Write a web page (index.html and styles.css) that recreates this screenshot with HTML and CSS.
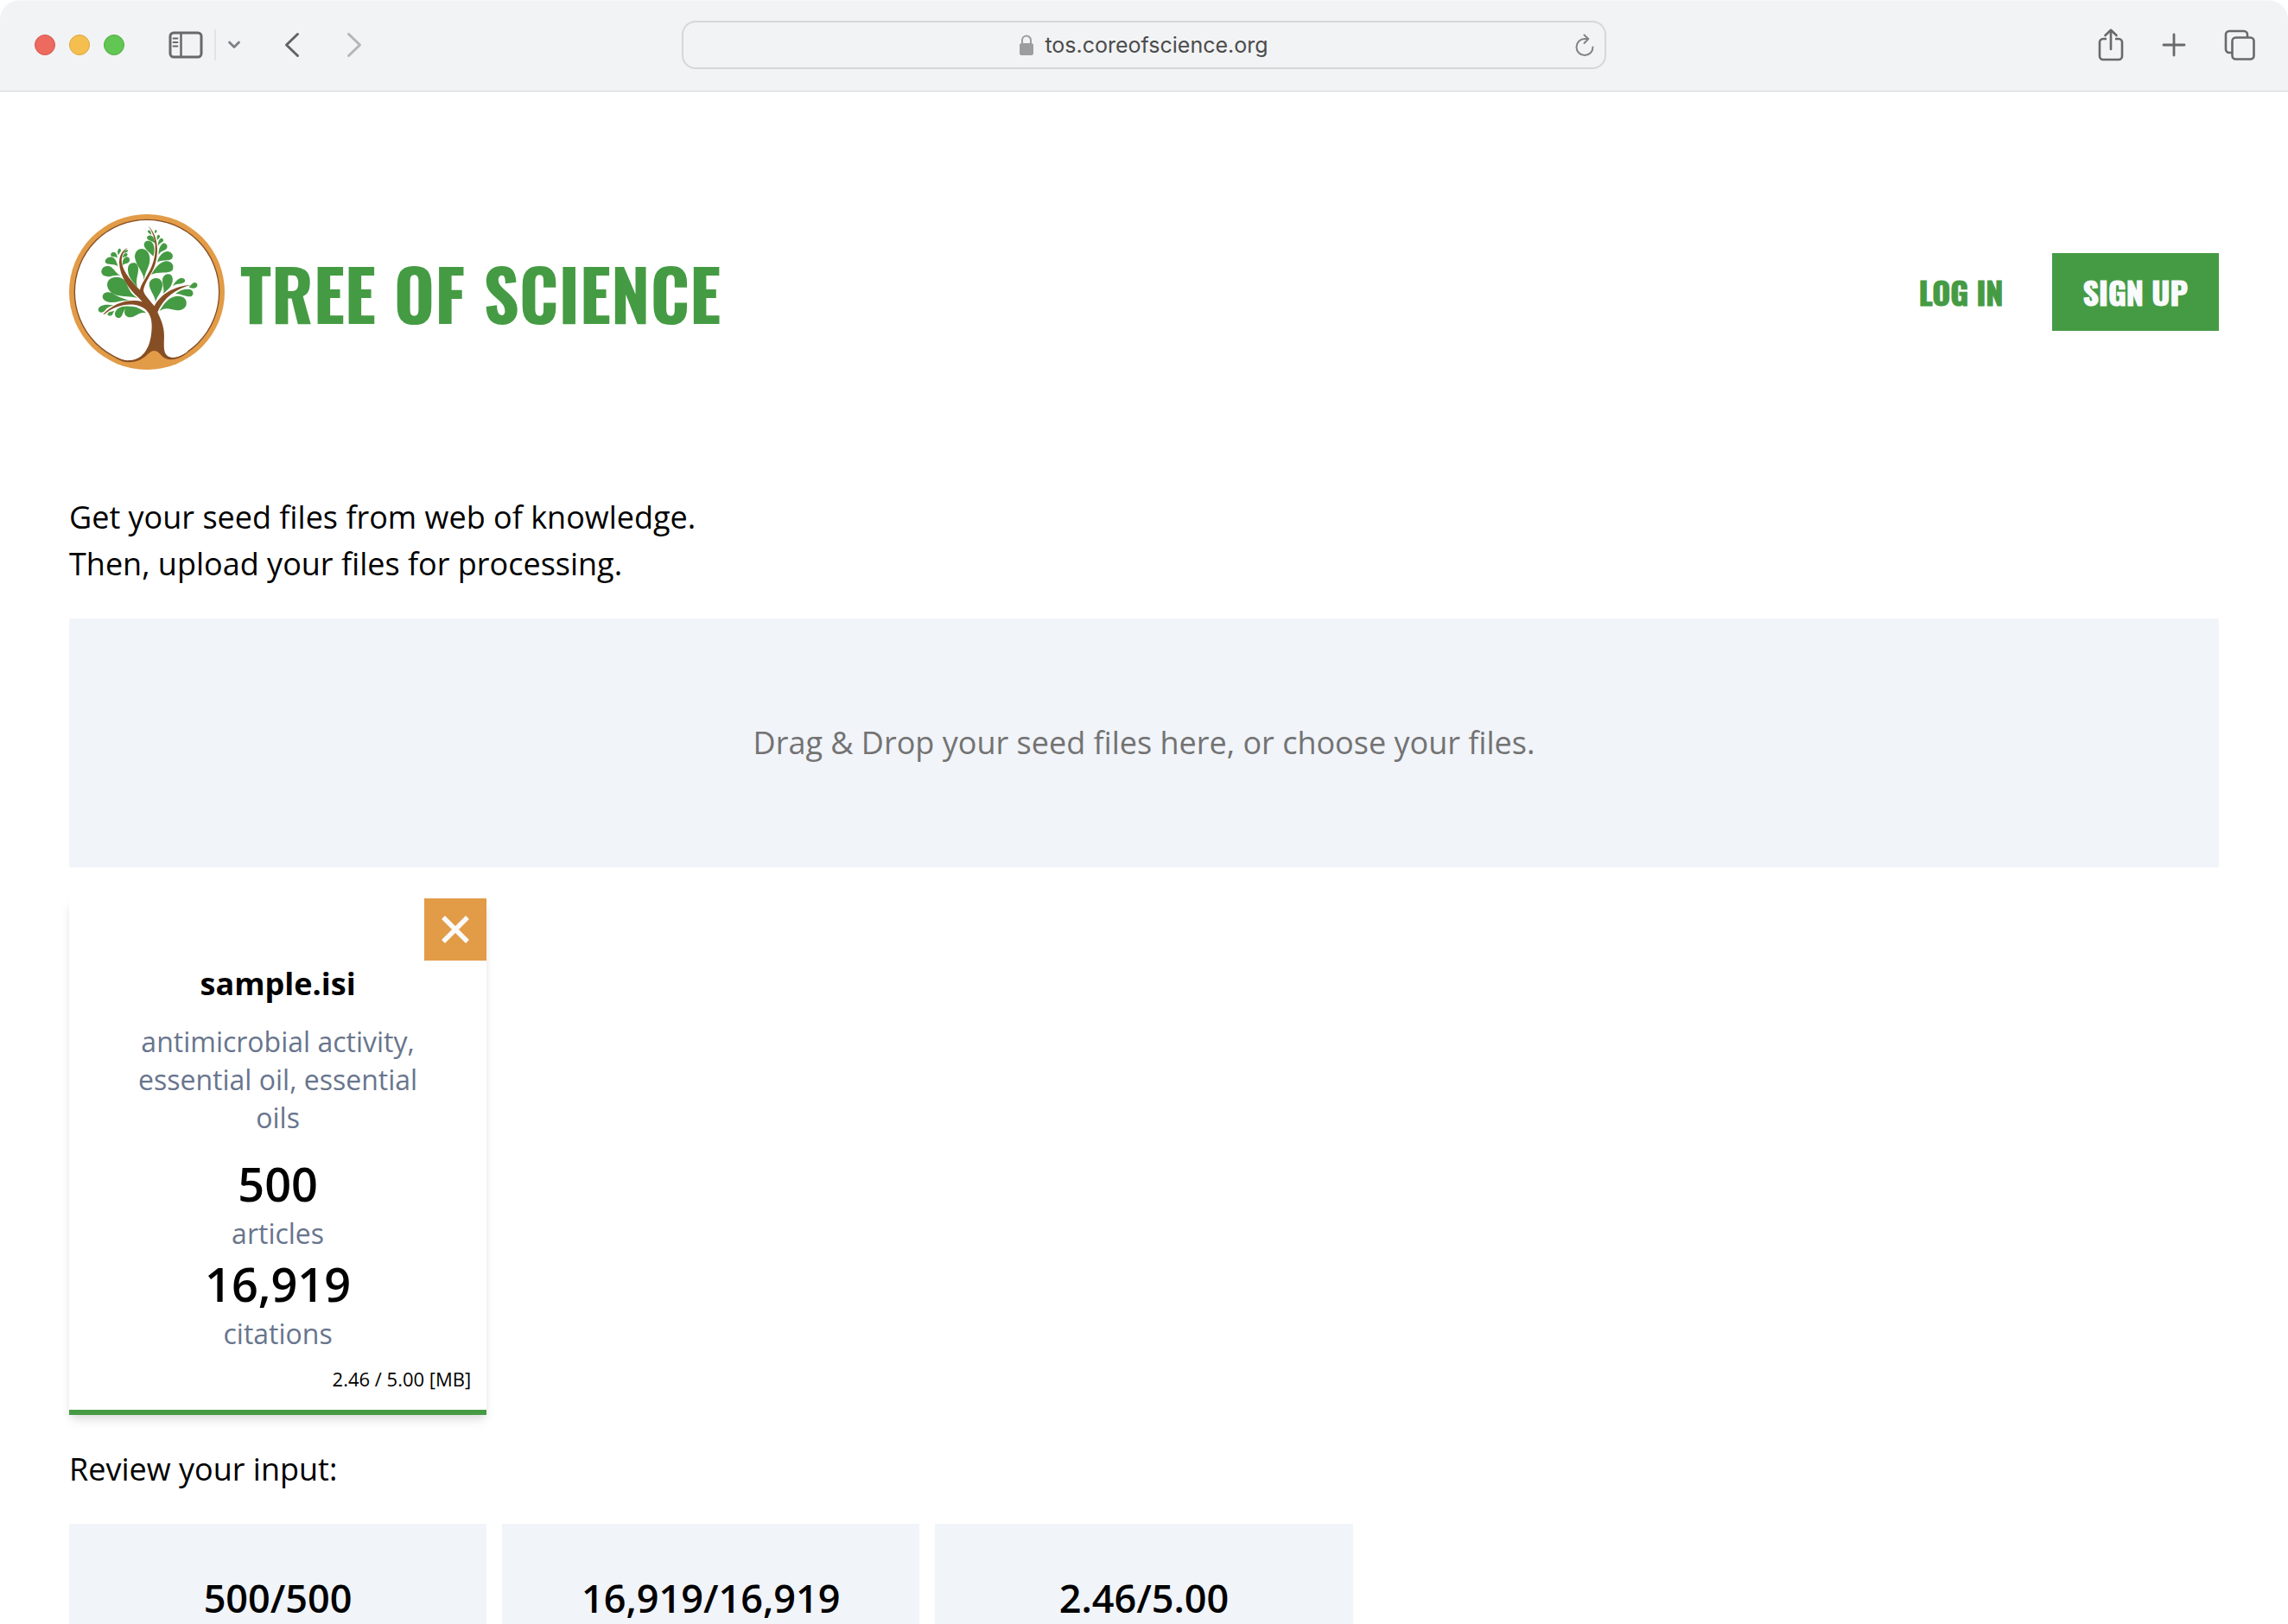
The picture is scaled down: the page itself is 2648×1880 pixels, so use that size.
FILE: index.html
```html
<!DOCTYPE html>
<html lang="en">
<head>
<meta charset="utf-8">
<title>Tree of Science</title>
<meta name="viewport" content="width=device-width, initial-scale=1">
<link rel="stylesheet" href="styles.css">
</head>
<body>
<div class="toolbar">
  <div class="toolbar-side">
    <div class="lights"><span class="light red"></span><span class="light yellow"></span><span class="light green"></span></div>
    <button class="tool sidebar-tool" aria-label="Show sidebar">
      <svg width="40" height="32" viewBox="0 0 40 32" fill="none" stroke="#69696b" stroke-width="3"><rect x="2" y="2" width="36" height="28" rx="4"/><path d="M14.500 2v28" stroke-width="2.500"/><path d="M5.500 8.500h5M5.500 13h5M5.500 17.500h5" stroke-width="1.800" stroke-linecap="round"/></svg>
    </button>
    <span class="divider"></span>
    <button class="tool menu-tool" aria-label="Sidebar options">
      <svg width="16" height="12" viewBox="0 0 16 12" fill="none" stroke="#7f7f86" stroke-width="2.800" stroke-linecap="round" stroke-linejoin="round"><path d="M2.500 3l5.500 5.500L13.500 3"/></svg>
    </button>
    <button class="tool back-tool" aria-label="Back">
      <svg width="18" height="30" viewBox="0 0 18 30" fill="none" stroke="#636366" stroke-width="3" stroke-linecap="round" stroke-linejoin="round"><path d="M15.500 2.500L2.500 15l13 12.500"/></svg>
    </button>
    <button class="tool" aria-label="Forward">
      <svg width="18" height="30" viewBox="0 0 18 30" fill="none" stroke="#b4b5b7" stroke-width="3" stroke-linecap="round" stroke-linejoin="round"><path d="M2.500 2.500L15.500 15l-13 12.500"/></svg>
    </button>
  </div>
  <div class="address">
    <svg width="16" height="24" viewBox="0 0 16 24"><rect x="0" y="10" width="16" height="14" rx="2.500" fill="#9c9d9d"/><path d="M3 11V6.500a5 5 0 0 1 10 0V11" fill="none" stroke="#9c9d9d" stroke-width="2"/></svg>
    <span>tos.coreofscience.org</span>
    <button class="reload" aria-label="Reload page">
      <svg width="22" height="26" viewBox="0 0 22 26" fill="none" stroke="#838385" stroke-width="2" stroke-linecap="round" stroke-linejoin="round"><path d="M15 6H11A9.500 9.500 0 1 0 20.500 15.500M10.500 1.500L15.300 6l-4.800 5"/></svg>
    </button>
  </div>
  <div class="toolbar-side toolbar-end">
    <button class="tool" aria-label="Share">
      <svg width="30" height="38" viewBox="0 0 30 38" fill="none" stroke="#69696b" stroke-width="2.600" stroke-linejoin="round"><path d="M10 12H6a4 4 0 0 0-4 4v16a4 4 0 0 0 4 4h18a4 4 0 0 0 4-4V16a4 4 0 0 0-4-4h-4"/><path d="M15 24V2M8.500 8L15 1.800 21.500 8" stroke-linecap="round"/></svg>
    </button>
    <button class="tool" aria-label="New tab">
      <svg width="28" height="28" viewBox="0 0 28 28" stroke="#69696b" stroke-width="2.800" stroke-linecap="round"><path d="M14 2v24M2 14h24"/></svg>
    </button>
    <button class="tool" aria-label="Show all tabs">
      <svg width="36" height="36" viewBox="0 0 36 36" fill="none" stroke="#69696b" stroke-width="2.600"><path d="M9 27H6a4 4 0 0 1-4-4V6a4 4 0 0 1 4-4h17a4 4 0 0 1 4 4v3"/><rect x="9.500" y="9.500" width="25" height="25" rx="4"/></svg>
    </button>
  </div>
</div>

<div class="page">
  <header class="header">
    <a class="brand" href="#">
      <svg class="logo" viewBox="30 36 540 540" aria-hidden="true">
        <circle cx="300" cy="306" r="270" fill="#e29b47"/>
        <circle cx="300" cy="306" r="251" fill="#fff" stroke="#864e24" stroke-width="4"/>
        <path fill="#e29b47" d="M195 538C250 562 285 530 300 500H345C355 540 375 550 415 532L400 556L300 570L200 556Z"/>
        <path fill="#fff" d="M190 529C205 538 222 545 242 545C290 543 316 490 318 430L358 440C354 510 355 538 388 535C408 533 424 526 442 512L400 420H200Z"/>
        <path fill="#864e24" d="M148 384C175 352 220 333 262 336C272 337 278 338 284 340L270 325C235 294 206 250 204 205C204 180 214 161 234 152C217 166 210 185 213 206C220 240 250 273 276 299C278 280 303 250 317 216C336 170 334 115 305 77C338 108 343 165 328 212C317 244 290 275 288 302C292 318 312 337 326 355C347 313 400 283 454 282C405 292 358 325 337 376C345 395 360 420 360 460C359 500 355 530 388 534C412 534 430 524 450 508C430 530 405 541 380 541C350 540 347 510 325 510C303 510 295 548 240 550C220 550 200 543 180 527C200 539 220 545 242 543C290 540 316 495 317 425C317 398 310 382 296 367C262 338 195 345 152 384Z"/>
        <g fill="#459b43">
          <path d="M298 379C270 358 245 350 228 362C215 375 225 395 243 394C265 392 270 374 298 379Z"/>
          <path d="M243 357C215 352 193 362 189 380C188 398 208 402 214 387C219 373 222 362 243 357Z"/>
          <path d="M187 371C178 374 164 374 163 384C166 391 178 390 181 383C183 378 184 375 187 371Z"/>
          <path d="M184 352C160 348 136 350 131 366C131 380 148 380 155 370C162 360 172 356 184 352Z"/>
          <path d="M238 335C215 330 195 320 178 309C160 302 145 310 146 324C150 343 180 346 205 338C218 335 228 335 238 335Z"/>
          <path d="M268 327C240 312 236 290 226 270C212 250 180 250 166 267C155 285 168 310 195 317C220 322 240 320 268 327Z"/>
          <path d="M208 249C190 240 185 222 170 217C155 212 141 222 142 238C147 256 168 254 182 250C192 247 200 248 208 249Z"/>
          <path d="M200 217C195 205 193 190 180 185C165 182 152 192 156 204C164 213 185 206 200 217Z"/>
          <path d="M198 188C196 180 196 170 186 168C176 167 171 176 177 182C184 186 192 182 198 188Z"/>
          <path d="M201 178C198 170 196 160 204 155C211 155 211 163 207 168Z"/>
          <path d="M216 213C214 200 218 187 230 184C241 184 243 197 237 203C230 208 222 206 216 213Z"/>
          <path d="M215 188C217 176 222 170 230 171C235 174 233 182 227 183C222 184 219 184 215 188Z"/>
          <path d="M220 172C222 164 227 159 233 160C236 164 232 168 228 169Z"/>
          <path d="M268 291C255 275 235 255 234 230C233 210 245 202 258 205C272 210 272 228 268 245C264 262 262 275 268 291Z"/>
          <path d="M290 264C288 235 262 215 258 185C258 162 275 152 292 158C310 167 314 190 307 212C300 232 292 245 290 264Z"/>
          <path d="M322 183C315 170 292 160 290 143C290 128 305 124 316 132C328 142 328 165 322 183Z"/>
          <path d="M327 138C322 128 302 130 300 118C302 107 315 108 321 115C326 122 328 130 327 138Z"/>
          <path d="M316 108C312 104 302 102 303 94C307 88 313 93 314 99Z"/>
          <path d="M328 103C327 97 326 91 331 90C337 93 335 99 328 103Z"/>
          <path d="M336 126C334 116 334 108 341 107C348 110 345 118 340 121Z"/>
          <path d="M339 146C337 135 342 122 350 119C358 121 360 128 353 133C346 137 341 140 339 146Z"/>
          <path d="M341 178C339 160 346 142 358 136C372 138 375 152 365 159C355 164 345 166 341 178Z"/>
          <path d="M336 203C340 185 352 168 370 165C388 165 395 182 386 191C372 200 350 192 336 203Z"/>
          <path d="M315 246C328 225 340 205 365 199C388 198 396 216 389 230C375 245 340 232 315 246Z"/>
          <path d="M330 342C330 320 308 300 308 278C310 260 328 254 343 260C358 270 356 290 348 305C340 320 332 328 330 342Z"/>
          <path d="M357 313C362 298 353 280 354 262C358 245 373 240 384 247C393 258 390 275 382 287C374 298 364 303 357 313Z"/>
          <path d="M389 285C398 272 405 260 420 257C432 258 436 266 430 272C418 280 402 276 389 285Z"/>
          <path d="M446 290C452 284 455 276 465 273C475 273 478 282 473 289C466 296 456 292 446 290Z"/>
          <path d="M399 312C415 300 430 295 450 297C462 302 464 314 455 321C440 326 420 312 399 312Z"/>
          <path d="M343 373C358 350 370 328 400 321C425 318 440 330 437 350C430 372 405 372 385 366C368 362 355 364 343 373Z"/>
        </g>
      </svg>
      <h1 class="title">TREE OF SCIENCE</h1>
    </a>
    <nav class="nav">
      <a class="login" href="#">LOG IN</a>
      <a class="signup" href="#">SIGN UP</a>
    </nav>
  </header>

  <main class="main">
    <p>Get your seed files from web of knowledge.<br>Then, upload your files for processing.</p>
    <button class="dropzone">Drag &amp; Drop your seed files here, or choose your files.</button>
    <div class="grid">
      <article class="card">
        <button class="remove" aria-label="Remove file">
          <svg width="32" height="32" viewBox="0 0 32 32" stroke="#fafafa" stroke-width="5.500"><path d="M2 2l28 28M30 2L2 30"/></svg>
        </button>
        <div class="card-body">
          <h2 class="filename">sample.isi</h2>
          <p class="note keywords">antimicrobial activity, essential oil, essential oils</p>
          <p class="count">500</p>
          <p class="note">articles</p>
          <p class="count">16,919</p>
          <p class="note">citations</p>
        </div>
        <p class="size">2.46 / 5.00 [MB]</p>
      </article>
    </div>
    <p>Review your input:</p>
    <div class="grid">
      <div class="stat">500/500</div>
      <div class="stat">16,919/16,919</div>
      <div class="stat">2.46/5.00</div>
    </div>
  </main>
</div>
</body>
</html>
```
FILE: styles.css
```css
* { box-sizing: border-box; }
html { background: #fff; }
body {
  margin: 0;
  height: 100vh;
  overflow: hidden;
  font-family: "Open Sans", "Noto Sans", sans-serif;
  font-size: 36px;
  line-height: 54px;
  color: #000;
}
h1, h2, p { margin: 0; font-weight: inherit; }
button { border: 0; padding: 0; background: none; font: inherit; color: inherit; cursor: pointer; }
a { text-decoration: none; color: inherit; }
svg { display: block; flex: none; }

.toolbar {
  display: grid;
  grid-template-columns: 1fr 1070px 1fr;
  align-items: center;
  height: 106px;
  padding: 0 38px 2px;
  background: #f2f3f5;
  border-top: 1px solid #f8f9fa;
  border-bottom: 1px solid #d6d7d9;
  border-radius: 22px 22px 0 0;
}
.toolbar-side { display: flex; align-items: center; }
.toolbar-end { justify-content: flex-end; gap: 44px; }
.lights { display: flex; gap: 16px; margin-left: 2px; }
.light { width: 24px; height: 24px; border-radius: 50%; border: 1px solid; }
.red { background: #ec6a5e; border-color: #d8564c; }
.yellow { background: #f5bf4f; border-color: #dca73c; }
.green { background: #62c655; border-color: #4fae41; }
.sidebar-tool { margin-left: 51px; }
.divider { width: 2px; height: 36px; margin: 0 13px; background: #e2e3e5; }
.back-tool { margin: 0 54px 0 50px; }

.address {
  position: relative;
  display: flex;
  align-items: center;
  justify-content: center;
  gap: 13px;
  height: 56px;
  border: 2px solid #d5d7d9;
  border-radius: 16px;
  font: 25px/32px Inter, sans-serif;
  color: #4c4c4c;
}
.reload { position: absolute; right: 12px; }

.page { padding: 0 80px; }
.header { display: flex; justify-content: space-between; align-items: center; padding: 142px 0 144px; }
.brand, .nav { display: flex; align-items: center; font-family: Oswald, "Liberation Sans Narrow", "Liberation Sans", sans-serif; font-weight: 700; color: #459b43; }
.brand { gap: 18px; }
.logo { width: 180px; height: 180px; }
.title { font-size: 81px; line-height: 90px; font-weight: 700; }
.nav { font-size: 36px; gap: 56px; -webkit-text-stroke: 1px; }
.signup { padding: 18px 36px; background: #459b43; color: #f9fafc; }

.main { display: flex; flex-direction: column; gap: 36px; }
.dropzone { height: 288px; background: #f1f4f9; color: #737373; }
.grid { display: grid; grid-template-columns: repeat(5, 1fr); gap: 18px; }
.card {
  display: flex;
  flex-direction: column;
  border-bottom: 6px solid #459b43;
  box-shadow: 0 8px 12px -2px rgba(0, 0, 0, .1), 0 4px 8px -2px rgba(0, 0, 0, .06);
}
.remove { display: grid; place-items: center; align-self: flex-end; width: 72px; height: 72px; background: #e29b47; }
.card-body { padding: 0 72px; text-align: center; }
.filename { font-size: 36px; font-weight: 700; }
.note { font-size: 32px; line-height: 44px; color: #68758d; }
.keywords { margin: 18px 0; }
.count { font-size: 54px; line-height: 72px; font-weight: 600; }
.size { padding: 12px 18px 18px; text-align: right; font-size: 22px; line-height: 36px; }
.stat { padding: 54px 18px; background: #f1f4f9; text-align: center; font-size: 45px; line-height: 64px; font-weight: 600; }
```
